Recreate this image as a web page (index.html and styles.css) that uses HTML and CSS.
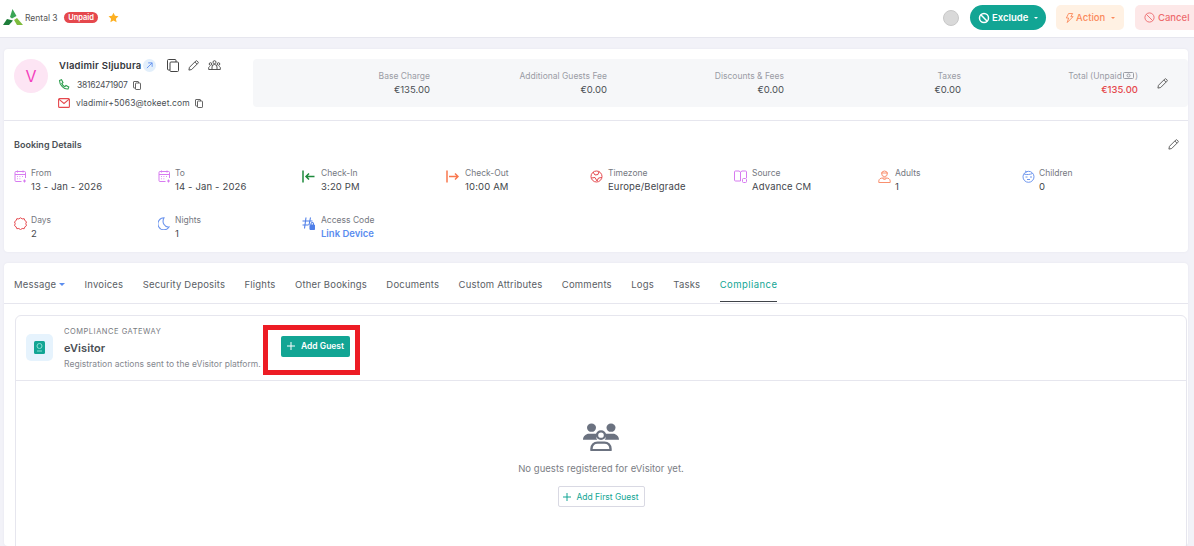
FILE: index.html
```html
<!DOCTYPE html>
<html lang="en">
<head>
<meta charset="utf-8">
<title>Booking</title>
<link rel="stylesheet" href="styles.css">
</head>
<body>
<header class="topbar">
  <div class="brand">
    <svg class="logo" width="20" height="17" viewBox="0 0 20 17"><path d="M9.500 0l4 7-4.500 2.500-2-1.500z" fill="#3aa655"/><path d="M0 16l4-6 6 1.500L6 16z" fill="#1e7d3a"/><path d="M11 11l3-2 6 7h-6z" fill="#7dbb3c"/></svg>
    <span class="rental">Rental 3</span>
    <span class="pill">Unpaid</span>
    <svg class="star" width="11" height="11" viewBox="0 0 24 24"><path d="M12 1.500l3.300 6.900 7.500 1-5.500 5.200 1.400 7.500-6.700-3.700-6.700 3.700 1.400-7.500L1.200 9.400l7.500-1z" fill="#fdb022"/></svg>
  </div>
  <div class="actions">
    <span class="dot"></span>
    <button class="btn btn-exclude"><svg width="12" height="12" viewBox="0 0 12 12" fill="none" stroke="currentColor" stroke-width="1.500"><circle cx="6" cy="6" r="4.500"/><path d="M2.800 2.800l6.400 6.400"/></svg>Exclude<i class="caret"></i></button>
    <button class="btn btn-action"><svg width="9" height="12" viewBox="0 0 10 12" fill="none" stroke="currentColor"><path d="M4 1h4.500L6.500 4.500h2.500L2.500 11l1.500-5H1.500z"/></svg>Action<i class="caret"></i></button>
    <button class="btn btn-cancel"><svg width="11" height="11" viewBox="0 0 12 12" fill="none" stroke="currentColor"><circle cx="6" cy="6" r="5"/><path d="M2.500 2.500l7 7"/></svg>Cancel</button>
  </div>
</header>

<main class="page">
  <section class="card booking">
    <div class="guest-row">
      <div class="avatar">V</div>
      <div class="guest">
        <div class="guest-name">
          <strong>Vladimir Sljubura</strong>
          <span class="link-badge"><svg width="7" height="7" viewBox="0 0 8 8" fill="none" stroke="#5b8def" stroke-width="1"><path d="M1 7l6-6M2.500 1H7v4.500"/></svg></span>
          <span class="tools">
            <svg width="12" height="13" viewBox="0 0 12 13" fill="none" stroke="#444" stroke-width="1"><rect x="3" y="3" width="8.500" height="9.500" rx="1"/><path d="M3 11H1.500a1 1 0 0 1-1-1V1.500a1 1 0 0 1 1-1H8a1 1 0 0 1 1 1V3"/></svg>
            <svg width="11" height="11" viewBox="0 0 12 12" fill="none" stroke="#444" stroke-width="1"><path d="M1 11l.6-3L8.500 1.100a1 1 0 0 1 1.400 0l1 1a1 1 0 0 1 0 1.400L4 10.400zM7.500 2.200l2.300 2.300"/></svg>
            <svg width="13" height="11" viewBox="0 0 13 11" fill="none" stroke="#444" stroke-width=".9"><circle cx="6.500" cy="2.200" r="1.500"/><circle cx="2.500" cy="4" r="1.300"/><circle cx="10.500" cy="4" r="1.300"/><path d="M4 9.500V7a2.500 2.500 0 0 1 5 0v2.500zM4 9.500H.7V7.500l1-1.200M9 9.500h3.300V7.500l-1-1.200"/></svg>
          </span>
        </div>
        <div class="contact phone">
          <svg width="12" height="12" viewBox="0 0 12 12" fill="none" stroke="#2e9e4f" stroke-width="1.100"><path d="M1.500 1.500l2-.8 1.500 2.800-1.200 1c.6 1.500 1.700 2.600 3.200 3.200l1-1.200 2.800 1.500-.8 2C6 10.500 1.500 6 1.500 1.500z"/></svg>
          <span>38162471907</span>
          <svg class="mini" width="8" height="9" viewBox="0 0 8 9" fill="none" stroke="#555" stroke-width=".9"><rect x="2.500" y="2" width="5" height="6.500" rx=".6"/><path d="M2.500 7H1a.5.500 0 0 1-.5-.5V1A.5.500 0 0 1 1 .5h4a.5.500 0 0 1 .5.500v1"/></svg>
        </div>
        <div class="contact email">
          <svg width="12" height="10" viewBox="0 0 12 10" fill="none" stroke="#e5484d" stroke-width="1.100"><rect x=".6" y=".6" width="10.800" height="8.800" rx="1"/><path d="M.8 1.200L6 5.500l5.200-4.300"/></svg>
          <span>vladimir+5063@tokeet.com</span>
          <svg class="mini" width="8" height="9" viewBox="0 0 8 9" fill="none" stroke="#555" stroke-width=".9"><rect x="2.500" y="2" width="5" height="6.500" rx=".6"/><path d="M2.500 7H1a.5.500 0 0 1-.5-.5V1A.5.500 0 0 1 1 .5h4a.5.500 0 0 1 .5.500v1"/></svg>
        </div>
      </div>
      <div class="summary">
        <div class="amount"><span>Base Charge</span><b>€135.00</b></div>
        <div class="amount"><span>Additional Guests Fee</span><b>€0.00</b></div>
        <div class="amount"><span>Discounts &amp; Fees</span><b>€0.00</b></div>
        <div class="amount"><span>Taxes</span><b>€0.00</b></div>
        <div class="amount total"><span>Total (Unpaid <svg width="11" height="7" viewBox="0 0 11 7" fill="none" stroke="#9a9ca5"><rect x=".5" y=".5" width="10" height="6" rx="1"/><circle cx="5.500" cy="3.500" r="1.500"/></svg>)</span><b>€135.00</b></div>
        <svg class="edit" width="11" height="11" viewBox="0 0 12 12" fill="none" stroke="#555" stroke-width="1"><path d="M1 11l.6-3L8.500 1.100a1 1 0 0 1 1.400 0l1 1a1 1 0 0 1 0 1.400L4 10.400zM7.500 2.200l2.300 2.300"/></svg>
      </div>
    </div>

    <div class="details">
      <div class="details-head">
        <h2>Booking Details</h2>
        <svg width="11" height="11" viewBox="0 0 12 12" fill="none" stroke="#555" stroke-width="1"><path d="M1 11l.6-3L8.500 1.100a1 1 0 0 1 1.400 0l1 1a1 1 0 0 1 0 1.400L4 10.400zM7.500 2.200l2.300 2.300"/></svg>
      </div>
      <div class="detail-grid">
        <div class="item"><svg width="13" height="13" viewBox="0 0 13 13" fill="none" stroke="#d77bf0" stroke-width="1"><path d="M7.500 11.500H2a1 1 0 0 1-1-1V2.500a1 1 0 0 1 1-1h8.500a1 1 0 0 1 1 1V8M1 4.500h10.500M3.500.5v2M9 .5v2M10.500 9.500v3M9 11h3"/><path d="M3 6.500h.8M5.500 6.500h.8M8 6.500h.8M3 8.800h.8M5.500 8.800h.8"/></svg><div class="text"><span>From</span><b>13 - Jan - 2026</b></div></div>
        <div class="item"><svg width="13" height="13" viewBox="0 0 13 13" fill="none" stroke="#d77bf0" stroke-width="1"><path d="M7.500 11.500H2a1 1 0 0 1-1-1V2.500a1 1 0 0 1 1-1h8.500a1 1 0 0 1 1 1V8M1 4.500h10.500M3.500.5v2M9 .5v2M10.500 9.500v3M9 11h3"/><path d="M3 6.500h.8M5.500 6.500h.8M8 6.500h.8M3 8.800h.8M5.500 8.800h.8"/></svg><div class="text"><span>To</span><b>14 - Jan - 2026</b></div></div>
        <div class="item item-wide"><svg width="13" height="13" viewBox="0 0 13 13" fill="none" stroke="#1e8a3c" stroke-width="1.500"><path d="M1 .5v12M12.500 6.500H4M7 3.500L4 6.500l3 3"/></svg><div class="text"><span>Check-In</span><b>3:20 PM</b></div></div>
        <div class="item item-wide"><svg width="13" height="13" viewBox="0 0 13 13" fill="none" stroke="#f9784e" stroke-width="1.500"><path d="M1 .5v12M3 6.500h9M9 3.500l3 3-3 3"/></svg><div class="text"><span>Check-Out</span><b>10:00 AM</b></div></div>
        <div class="item item-mid"><svg width="13" height="13" viewBox="0 0 13 13" fill="none" stroke="#e5484d" stroke-width="1"><circle cx="6.500" cy="6.500" r="5.500"/><path d="M3 2l2 3 3-.5 1-3M1.500 8L5 7.500l2 3.500 1.500-3 3.500-.5"/></svg><div class="text"><span>Timezone</span><b>Europe/Belgrade</b></div></div>
        <div class="item item-mid"><svg width="13" height="13" viewBox="0 0 13 13" fill="none" stroke="#d77bf0" stroke-width="1"><path d="M6.500 11H1.500a1 1 0 0 1-1-1V2a1 1 0 0 1 1-1h3.500l1.500 1zM6.500 2L8 1h3.500a1 1 0 0 1 1 1v6M6.500 2v9"/><rect x="8.500" y="8.500" width="4" height="4" rx="1"/></svg><div class="text"><span>Source</span><b>Advance CM</b></div></div>
        <div class="item"><svg width="13" height="13" viewBox="0 0 13 13" fill="none" stroke="#f9906f" stroke-width="1"><circle cx="6.500" cy="3.800" r="2.800"/><path d="M3 3h7M.8 12.500v-1.500c0-2 2-3 3.500-3h4.400c1.500 0 3.500 1 3.500 3v1.500zM4.500 8l2 2 2-2"/></svg><div class="text"><span>Adults</span><b>1</b></div></div>
        <div class="item"><svg width="13" height="13" viewBox="0 0 13 13" fill="none" stroke="#6e96ee" stroke-width="1"><circle cx="6.500" cy="6.800" r="5.500"/><path d="M2 4c3 1 6 .5 8.500-.5M3.500 7h2M8 7h2M5 9.500h3M3 .8l2 1.500"/></svg><div class="text"><span>Children</span><b>0</b></div></div>
        <div class="item"><svg width="13" height="13" viewBox="0 0 13 13" fill="none" stroke="#e5484d" stroke-width="1"><path d="M6.500 .8l1.700 1.100 2-.2.700 1.900 1.600 1.200-.7 1.900.7 1.900-1.600 1.200-.7 1.900-2-.2-1.700 1.100-1.700-1.100-2 .2-.7-1.900L.5 8.600l.7-1.900-.7-1.900 1.600-1.200.7-1.900 2 .2z"/></svg><div class="text"><span>Days</span><b>2</b></div></div>
        <div class="item item-mid"><svg width="12" height="13" viewBox="0 0 12 13" fill="none" stroke="#6e96ee" stroke-width="1.100"><path d="M6 .8a6 6 0 1 0 5 9.200C6.500 10.500 3.500 5.500 6 .8z"/></svg><div class="text"><span>Nights</span><b>1</b></div></div>
        <div class="item item-wide"><svg width="13" height="13" viewBox="0 0 13 13" fill="none" stroke="#4f7fe8" stroke-width="1.100"><path d="M4 .5L2.500 11.500M8.500 .5L7 8M.5 4H10.500M.5 8H6.500"/><rect x="8" y="8" width="4.500" height="4.500" rx=".7" fill="#4f7fe8"/><path d="M9 8V6.800a1.200 1.200 0 0 1 2.500 0V8"/></svg><div class="text"><span>Access Code</span><a href="#">Link Device</a></div></div>
      </div>
    </div>
  </section>

  <section class="card tabs-card">
    <nav class="tabs">
      <a href="#">Message<i class="tab-caret"></i></a>
      <a href="#">Invoices</a>
      <a href="#">Security Deposits</a>
      <a href="#">Flights</a>
      <a href="#">Other Bookings</a>
      <a href="#">Documents</a>
      <a href="#">Custom Attributes</a>
      <a href="#">Comments</a>
      <a href="#">Logs</a>
      <a href="#">Tasks</a>
      <a href="#" class="active">Compliance</a>
    </nav>
    <div class="gateway">
      <div class="gateway-head">
        <div class="gw-icon"><svg width="11" height="13" viewBox="0 0 11 13"><rect width="11" height="13" rx="1.500" fill="#12a594"/><circle cx="5.500" cy="5" r="2.500" fill="none" stroke="#8adfd3"/><path d="M3 10h5" stroke="#8adfd3"/></svg></div>
        <div class="gw-text">
          <small>COMPLIANCE GATEWAY</small>
          <h3>eVisitor</h3>
          <p>Registration actions sent to the eVisitor platform.</p>
        </div>
        <button class="btn-add"><svg width="8" height="8" viewBox="0 0 8 8" stroke="#fff" stroke-width="1"><path d="M4 0v8M0 4h8"/></svg>Add Guest</button>
      </div>
      <div class="empty">
        <svg class="people" width="36" height="28" viewBox="0 0 36 30" preserveAspectRatio="none" fill="#6b7280"><circle cx="8.500" cy="5" r="4.500"/><circle cx="28" cy="5" r="4.500"/><path d="M0 18c0-4 3-6.500 6-6.500h6c1 0 2 .3 2.500.8-1.500 2-1.500 4.500-.2 5.700zM36 18c0-4-3-6.500-6-6.500h-6c-1 0-2 .3-2.500.8 1.500 2 1.500 4.500.2 5.700z"/><circle cx="18" cy="13" r="4" fill="none" stroke="#6b7280" stroke-width="2.400"/><path d="M8.500 29c-.5-6 3-8 6-8h7c3 0 6.500 2 6 8z" fill="none" stroke="#6b7280" stroke-width="2.400"/></svg>
        <p>No guests registered for eVisitor yet.</p>
        <button class="btn-first"><svg width="8" height="8" viewBox="0 0 8 8" stroke="#12a594" stroke-width="1"><path d="M4 0v8M0 4h8"/></svg>Add First Guest</button>
      </div>
    </div>
  </section>
</main>
<div class="annotation"></div>
</body>
</html>
```
FILE: styles.css
```css
* { box-sizing: border-box; }
html, body { margin: 0; height: 546px; overflow: hidden; }
body { background: #f2f2f8; font-family: Inter, "Liberation Sans", sans-serif; color: #3f4349; font-size: 9px; position: relative; }
button { font-family: inherit; border: 0; cursor: pointer; white-space: nowrap; padding: 0; }
svg { flex: none; display: block; }

.topbar { height: 38px; background: #fff; border-bottom: 1px solid #e6e6ee; display: flex; align-items: center; justify-content: space-between; padding: 0 0 2px 3px; }
.brand { display: flex; align-items: center; }
.rental { margin-left: 2px; font-size: 8.500px; color: #555; }
.pill { margin-left: 6px; background: #e5484d; color: #fff; border-radius: 6px; height: 11px; line-height: 11px; padding: 0 4.500px; font-size: 7.500px; font-weight: 600; }
.star { margin-left: 10px; }
.actions { display: flex; align-items: center; margin-right: -6px; }
.dot { width: 16px; height: 16px; border-radius: 50%; background: #d9d9d9; border: 1px solid #c8c8c8; margin-right: 11px; }
.btn { display: flex; align-items: center; gap: 2px; height: 25px; font-size: 9.500px; font-weight: 500; padding: 0 9px; border-radius: 5px; white-space: nowrap; }
.btn-exclude { background: #12a594; color: #fff; border-radius: 13px; width: 76px; margin-right: 10px; font-weight: 600; padding-left: 8px; }
.btn-action { background: #fff1e3; color: #fb8a5c; width: 68px; margin-right: 11px; }
.btn-cancel { background: #fde8e8; color: #ee6b6e; width: 65px; padding-left: 9px; gap: 3px; }
.caret { border: 2.500px solid transparent; border-top-color: currentColor; border-bottom: 0; margin-left: 4px; }

.page { padding: 11px 6px 0 4px; }
.card { background: #fff; border-radius: 4px; }
.booking { height: 203px; box-shadow: 0 0 2px #e4e4ec; }
.guest-row { height: 72px; padding: 10px 0 0 10px; border-bottom: 1px solid #e6e6ee; display: flex; }
.avatar { width: 34px; height: 34px; border-radius: 50%; background: #fde5f4; color: #f43fbd; font-size: 16px; display: flex; align-items: center; justify-content: center; }
.guest { margin-left: 10px; width: 195px; }
.guest-name { display: flex; align-items: center; height: 14px; margin-top: -1px; }
.guest-name strong { font-size: 9.500px; font-weight: 600; color: #33363b; letter-spacing: .25px; margin-left: 1px; }
.link-badge { width: 13px; height: 13px; border-radius: 50%; background: #e2effb; margin-left: 1px; display: flex; align-items: center; justify-content: center; }
.tools { display: flex; align-items: center; gap: 9px; margin-left: 11px; }
.contact { display: flex; align-items: center; font-size: 8.500px; color: #4b4f55; height: 12px; margin-top: 6px; }
.phone { margin-top: 7px; }
.contact span { margin-left: 7px; }
.phone span { letter-spacing: -.25px; }
.contact.email span { margin-left: 6px; letter-spacing: .12px; }
.contact .mini { margin-left: 5px; }
.summary { width: 935px; height: 48px; background: #f6f7f9; border-radius: 4px; display: grid; grid-template-columns: repeat(5, 177px) 1fr; align-items: center; }
.amount { display: flex; flex-direction: column; align-items: flex-end; gap: 3px; padding-bottom: 1px; }
.amount span { font-size: 8.500px; color: #9a9ca5; display: flex; align-items: center; gap: 1px; white-space: nowrap; }
.amount b { font-size: 9.500px; font-weight: 400; color: #4b4f55; }
.total b { color: #e5484d; font-weight: 500; }
.edit { justify-self: center; margin-right: 2px; }

.details { padding: 17px 9px 0 10px; }
.details-head { display: flex; justify-content: space-between; align-items: center; height: 12px; }
h2 { margin: 0; font-size: 9px; font-weight: 600; color: #4b4f55; }
.detail-grid { display: grid; grid-template-columns: repeat(8, 144px); grid-auto-rows: 47px; margin-top: 18px; }
.item { display: flex; gap: 4px; }
.item-wide { gap: 6px; }
.item-mid { gap: 5px; }
.item > svg { margin-top: 2px; }
.text { display: flex; flex-direction: column; gap: 3px; }
.text span { font-size: 8.500px; color: #75787f; }
.text b { font-size: 9.500px; font-weight: 400; letter-spacing: .15px; color: #43464c; }
.text a { font-size: 9.500px; font-weight: 600; color: #5b8def; text-decoration: none; }

.tabs-card { margin-top: 11px; height: 283px; box-shadow: 0 0 2px #e4e4ec; }
.tabs { height: 41px; border-bottom: 1px solid #e6e6ee; display: flex; padding-left: 10px; gap: 19.400px; }
.tabs a { height: 39px; padding-top: 4px; font-size: 9.500px; letter-spacing: .19px; color: #5a5e65; text-decoration: none; white-space: nowrap; display: flex; align-items: center; }
.tabs a.active { color: #12a594; border-bottom: 1px solid #3f4349; letter-spacing: .45px; }
.tab-caret { border: 3px solid transparent; border-top-color: #5b8def; border-bottom: 0; margin-left: 3px; }

.gateway { margin: 11px 1px 0 11px; border: 1px solid #e6e6ee; border-radius: 6px; height: 240px; }
.gateway-head { height: 65px; border-bottom: 1px solid #e6e6ee; display: flex; padding-left: 10px; }
.gw-icon { width: 27px; height: 27px; margin-top: 18px; background: #e6f3fd; border-radius: 5px; display: flex; align-items: center; justify-content: center; }
.gw-text { margin-left: 11px; padding-top: 11px; width: 217px; white-space: nowrap; }
.gw-text small { display: block; font-size: 7.500px; color: #777a80; letter-spacing: .52px; }
h3 { margin: 5px 0 4px; font-size: 11px; font-weight: 600; color: #4b4f55; letter-spacing: .1px; }
.gw-text p { margin: 0; font-size: 8.500px; color: #85888f; letter-spacing: .04px; }
.btn-add { width: 69px; height: 21px; margin-top: 20px; padding-bottom: 1px; background: #12a594; color: #fff; border-radius: 2px; font-size: 8.500px; font-weight: 600; display: flex; align-items: center; justify-content: center; gap: 6px; }
.empty { display: flex; flex-direction: column; align-items: center; padding-top: 42px; }
.empty p { margin: 12px 0 0; font-size: 9.500px; color: #7b7e85; letter-spacing: .04px; }
.btn-first { margin-top: 12px; width: 87px; height: 21px; background: #fff; border: 1px solid #d9d9e3; border-radius: 2px; color: #12a594; font-size: 8.500px; display: flex; align-items: center; justify-content: center; gap: 5px; }

.annotation { position: absolute; left: 263px; top: 325px; width: 97px; height: 50px; border: 5px solid #ed1c24; }
```
